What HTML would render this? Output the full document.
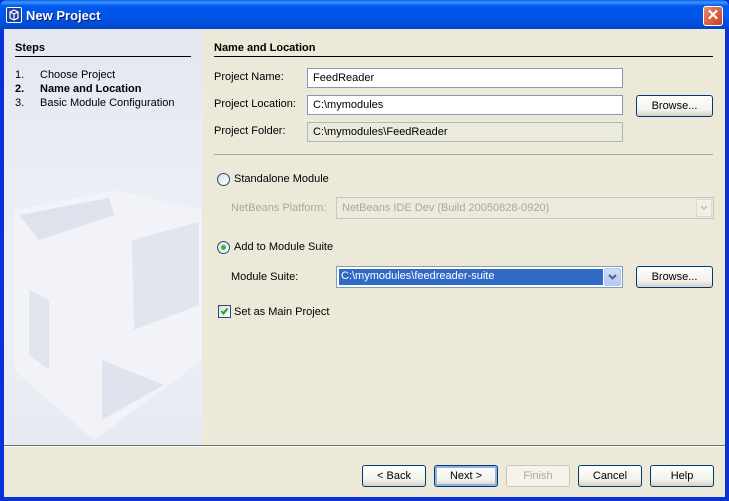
<!DOCTYPE html>
<html><head><meta charset="utf-8"><style>
*{margin:0;padding:0;box-sizing:border-box}
body{width:729px;height:501px;overflow:hidden;font-family:"Liberation Sans",sans-serif;font-size:11px;color:#000;background:#0831d9;position:relative}
.a{position:absolute;white-space:nowrap}
.win{position:absolute;left:4px;top:29px;width:721px;height:468px;background:#ece9d8}
.title{position:absolute;left:0;top:0;width:729px;height:30px;border-radius:7px 7px 0 0;background:linear-gradient(#0a5fe8 0%,#3d95ff 8%,#0058ee 20%,#0055e5 60%,#0048d0 90%,#003fc0 100%)}
.fld{position:absolute;background:#fff;border:1px solid #7f9db9;padding:3px 0 0 5px;height:20px}
.btn{position:absolute;height:22px;border:1px solid #003c74;border-radius:3px;background:linear-gradient(#fff,#f2f1ea 70%,#d6d0c5);text-align:center;line-height:20px}
.line{position:absolute;height:1px;background:#000}
.rad{position:absolute;width:13px;height:13px;border-radius:50%;border:1px solid #1c5180;background:linear-gradient(135deg,#dcdcd7,#fff)}
</style></head><body>
<div class="title"></div>
<div class="a" style="left:6px;top:7px;width:16px;height:16px;background:#2040a0;border:1px solid #fff;border-radius:2px"><svg width="14" height="14"><path d="M3 4 L7 2 L11 4 L11 10 L7 12 L3 10 Z M3 4 L7 6 L11 4 M7 6 L7 12" stroke="#fff" fill="none" stroke-width="1.2"/></svg></div>
<div class="a" style="left:26px;top:8px;color:#fff;font-weight:bold;font-size:13px;text-shadow:1px 1px #0a1e6a">New Project</div>
<div class="a" style="left:703px;top:6px;width:20px;height:20px;border:1px solid #fff;border-radius:3px;background:linear-gradient(135deg,#e88a6a,#c8401c);color:#fff;font-weight:bold;font-size:15px;text-align:center;line-height:18px">✕</div>
<div class="win"></div>
<div class="a" style="left:4px;top:30px;width:198px;height:415px;background:linear-gradient(#e4e7f0 0%,#eceef5 40%,#eef0f6 70%,#e6e9f1 100%)"></div>
<svg class="a" style="left:4px;top:170px" width="198" height="275">
<polygon points="10,40 110,20 198,40 198,190 90,270 10,200" fill="#f2f3f8"/>
<polygon points="15,45 105,28 110,45 35,70" fill="#dfe2ec"/>
<polygon points="128,70 195,52 195,135 130,160" fill="#e2e5ee"/>
<polygon points="25,120 45,130 45,200 25,185" fill="#e2e5ee"/>
<polygon points="98,190 160,215 98,250" fill="#e0e3ed"/>
</svg>
<div class="a" style="left:15px;top:42px;font-weight:bold">Steps</div>
<div class="line" style="left:15px;top:56px;width:176px"></div>
<div class="a" style="left:15px;top:69px">1.</div><div class="a" style="left:40px;top:69px">Choose Project</div>
<div class="a" style="left:15px;top:83px;font-weight:bold">2.</div><div class="a" style="left:40px;top:83px;font-weight:bold">Name and Location</div>
<div class="a" style="left:15px;top:97px">3.</div><div class="a" style="left:40px;top:97px">Basic Module Configuration</div>

<div class="a" style="left:214px;top:42px;font-weight:bold">Name and Location</div>
<div class="line" style="left:214px;top:56px;width:499px"></div>
<div class="a" style="left:214px;top:71px">Project Name:</div>
<div class="fld" style="left:307px;top:68px;width:316px">FeedReader</div>
<div class="a" style="left:214px;top:98px">Project Location:</div>
<div class="fld" style="left:307px;top:95px;width:316px">C:\mymodules</div>
<div class="btn" style="left:636px;top:95px;width:77px">Browse...</div>
<div class="a" style="left:214px;top:125px">Project Folder:</div>
<div class="fld" style="left:307px;top:122px;width:316px;background:#ebeadb;border-color:#a9b8c9">C:\mymodules\FeedReader</div>
<div class="a" style="left:214px;top:154px;width:499px;height:1px;background:#aca899"></div>

<div class="rad" style="left:217px;top:173px"></div>
<div class="a" style="left:234px;top:173px">Standalone Module</div>
<div class="a" style="left:231px;top:202px;color:#aca899">NetBeans Platform:</div>
<div class="fld" style="left:336px;top:197px;width:378px;height:22px;background:#ebeadb;border-color:#c9c7ba;color:#aca899;padding-top:4px">NetBeans IDE Dev (Build 20050828-0920)</div>
<div class="a" style="left:696px;top:199px;width:16px;height:18px;background:#f0efe8;border:1px solid #dcdad0"><svg width="14" height="16"><path d="M4 6 L7 9 L10 6" stroke="#c0beb4" stroke-width="1.5" fill="none"/></svg></div>

<div class="rad" style="left:217px;top:241px"></div>
<div class="a" style="left:221px;top:245px;width:5px;height:5px;border-radius:50%;background:#3cb43c"></div>
<div class="a" style="left:234px;top:241px">Add to Module Suite</div>
<div class="a" style="left:231px;top:271px">Module Suite:</div>
<div class="fld" style="left:336px;top:266px;width:287px;height:22px;padding:2px"><div style="background:#316ac5;color:#fff;height:16px;width:264px;padding:1px 0 0 2px">C:\mymodules\feedreader-suite</div></div>
<div class="a" style="left:604px;top:268px;width:17px;height:18px;background:linear-gradient(#d2ddf9,#b4c7f5);border:1px solid #b4c8f6;border-radius:2px"><svg width="15" height="16"><path d="M4 6 L7.5 9.5 L11 6" stroke="#4d6185" stroke-width="2" fill="none"/></svg></div>
<div class="btn" style="left:636px;top:266px;width:77px">Browse...</div>

<div class="a" style="left:218px;top:305px;width:13px;height:13px;border:1px solid #1c5180;background:linear-gradient(135deg,#dcdcd7,#fff)"><svg width="11" height="11" style="position:absolute;left:0;top:0"><path d="M2.5 5 L4.5 7.5 L8.5 2.5" stroke="#21a121" stroke-width="2" fill="none"/></svg></div>
<div class="a" style="left:234px;top:306px">Set as Main Project</div>

<div class="a" style="left:4px;top:445px;width:721px;height:1px;background:#716f64"></div>
<div class="a" style="left:4px;top:446px;width:721px;height:1px;background:#fff"></div>
<div class="btn" style="left:362px;top:465px;width:64px">&lt; Back</div>
<div class="btn" style="left:434px;top:465px;width:64px;box-shadow:inset 0 0 0 2px #8fb0ea">Next &gt;</div>
<div class="btn" style="left:506px;top:465px;width:64px;border-color:#c9c7ba;background:#f5f4ea;color:#aca899">Finish</div>
<div class="btn" style="left:578px;top:465px;width:64px">Cancel</div>
<div class="btn" style="left:650px;top:465px;width:64px">Help</div>
</body></html>
